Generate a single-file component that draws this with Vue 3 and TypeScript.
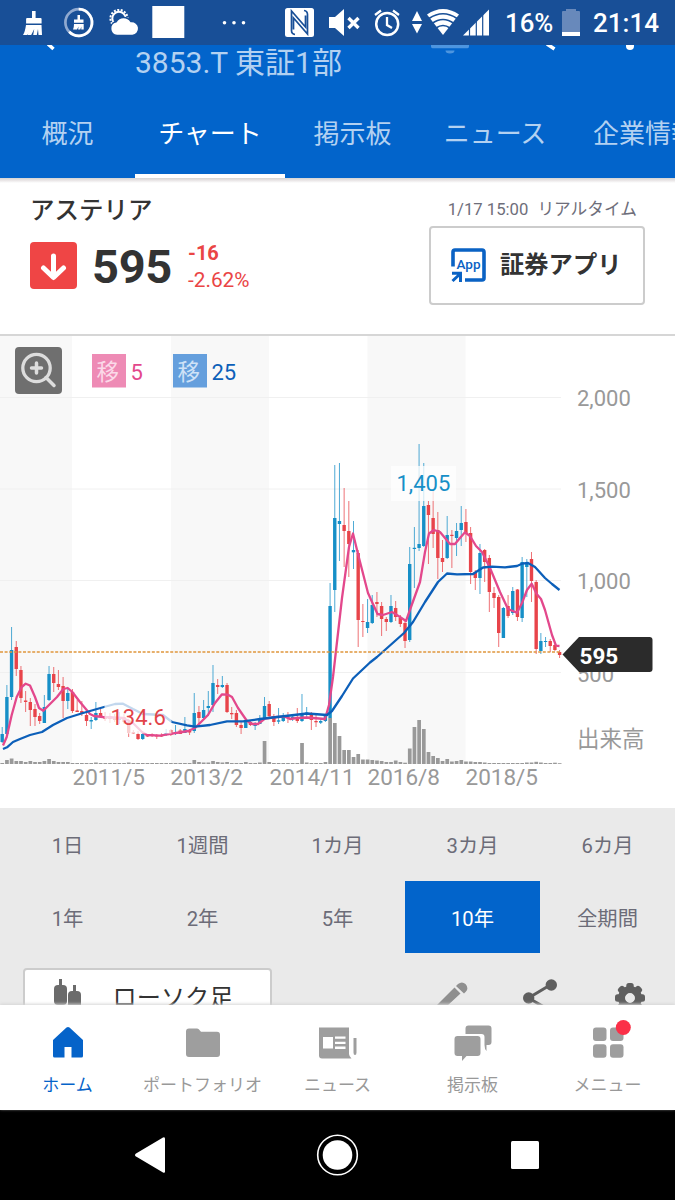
<script setup lang="ts">
type Dir = 'u' | 'd'
type Candle = [Dir, number, number, number, number]

const tabs = [
  { label: '概況', wide: false },
  { label: 'チャート', wide: true },
  { label: '掲示板', wide: false },
  { label: 'ニュース', wide: true },
  { label: '企業情報', wide: true },
]

const ranges = ['1日', '1週間', '1カ月', '3カ月', '6カ月', '1年', '2年', '5年', '10年', '全期間']

// Monthly candles: direction, high, body top, body bottom, low (chart units)
const candles: Candle[] = [
  ['u', 727, 734, 742, 743], ['u', 685, 697, 734, 735], ['u', 627, 650, 697, 700], ['d', 641, 647, 669, 676],
  ['d', 666, 670, 698, 703], ['d', 691, 700.5, 702, 712], ['d', 698, 702, 710, 726], ['d', 704, 709, 717, 726],
  ['d', 713, 716, 721, 724], ['u', 695, 707, 723, 723], ['u', 666, 674, 700, 701], ['d', 667, 674, 683, 692],
  ['d', 670, 684, 687, 690], ['d', 677, 686, 701, 718], ['u', 688, 693, 701, 709], ['d', 689, 692, 711, 713],
  ['d', 700, 710.5, 712, 712], ['d', 701, 711, 714, 716], ['d', 713, 715, 721, 726], ['u', 717, 720, 721.5, 729],
  ['u', 702, 713, 720, 721], ['d', 708, 713, 717, 718], ['d', 712, 716, 719, 721], ['d', 713, 716, 719, 723],
  ['d', 714, 717, 720, 722], ['u', 712, 718, 720, 724], ['d', 714, 717, 722, 724], ['d', 719, 722, 733, 737],
  ['d', 730, 732, 733.5, 734], ['d', 731, 734, 739, 740], ['u', 732, 734, 739, 740], ['d', 734, 735, 736.5, 737],
  ['d', 733, 734.5, 736, 737], ['d', 734, 735, 736.5, 739], ['d', 733, 735, 736.5, 737], ['u', 729, 733, 735, 736],
  ['d', 729, 730, 735, 736], ['u', 725, 732, 734, 735], ['d', 729, 730.5, 734, 734], ['u', 717, 729, 733, 733],
  ['d', 729, 730.5, 732.5, 735], ['u', 693, 713, 731, 733], ['d', 706, 712, 718, 724], ['u', 700, 710, 718, 719],
  ['u', 691, 706, 708, 716], ['u', 665, 683, 705, 712], ['d', 679, 685, 687, 694], ['u', 676, 685, 687, 688],
  ['d', 683, 685, 712, 713], ['d', 707, 713, 714.3, 719], ['d', 710, 713, 725, 727], ['d', 721, 725, 728, 734],
  ['u', 719, 721, 728, 728], ['d', 721, 722, 725, 726], ['u', 722, 724, 726, 730], ['u', 715, 718, 724, 724],
  ['u', 697, 706, 719, 720], ['d', 701, 704, 716, 718], ['d', 714, 716, 722, 726], ['u', 708, 720.3, 721.7, 724],
  ['u', 713, 717, 721, 722], ['d', 712, 716.7, 718, 723], ['u', 714, 716.7, 719, 721], ['d', 708, 718, 721, 723],
  ['u', 694, 715, 721, 722], ['u', 707, 712.5, 714, 719], ['d', 712, 713, 720, 730], ['d', 715, 721, 722.3, 727],
  ['u', 719, 721, 722.7, 724], ['u', 714, 716, 721, 722], ['u', 583, 606, 718, 718], ['u', 465, 518, 590, 612],
  ['u', 463, 521, 524, 561], ['d', 488, 525, 531, 567], ['d', 501, 531, 544, 577], ['u', 521, 550, 552.3, 569],
  ['d', 550, 553, 620, 647], ['d', 604, 621, 622, 637], ['u', 599, 622, 628, 633], ['u', 595, 605, 623, 624],
  ['d', 592, 602, 604, 617], ['d', 602, 606, 619, 636], ['d', 617, 619, 622, 631], ['u', 595, 606, 622, 623],
  ['d', 601, 608, 617, 621], ['d', 615, 618, 624, 627], ['d', 620, 623, 641, 648], ['u', 547, 564, 640, 642],
  ['u', 527, 547.8, 549, 588], ['u', 444, 544, 548, 551], ['u', 463, 506, 546, 547], ['d', 501, 505, 515, 564],
  ['d', 490, 518, 534, 548], ['d', 512, 530, 558, 579], ['d', 540, 558, 562, 572], ['u', 516, 535, 558, 559],
  ['d', 530, 534.8, 536, 568], ['u', 523, 531, 538, 556], ['u', 506, 523, 530, 546], ['d', 509, 522, 533, 542],
  ['d', 527, 533, 572, 584], ['d', 570, 572, 578, 590], ['u', 544, 553, 578, 594], ['d', 549, 550, 562, 582],
  ['d', 555, 558, 592, 612], ['d', 587, 593, 598, 608], ['d', 595, 597, 633, 647], ['u', 607, 608, 638, 638],
  ['d', 595, 606, 616, 618], ['u', 587, 591, 613, 615], ['d', 589, 589.5, 617, 621], ['u', 557, 562, 618, 622],
  ['u', 559, 563, 567, 597], ['d', 552, 559, 581, 602], ['d', 580, 582, 649, 654], ['u', 633, 641, 651, 654],
  ['u', 637, 641, 642, 647], ['d', 639, 641, 646, 652], ['d', 643, 645, 650, 651], ['d', 650, 652, 655, 658],
]

const volumes: number[] = [
  1, 4, 5.5, 3, 3, 2, 3, 2, 2, 3, 5, 3, 2, 2, 2, 1, 1, 1, 1, 1, 1.5, 1, 1, 1, 1, 1, 1, 1.5, 1, 1,
  1, 1, 1, 1, 1, 1, 1, 1, 1, 1, 1, 4, 2, 1.5, 1.5, 3, 2, 1.5, 2, 1, 1, 1, 2, 1, 1, 1.5, 23, 2, 1, 1,
  1, 1, 1, 1, 21, 1.5, 1, 1, 1, 2, 46, 41, 28, 14, 14, 7, 10, 4.5, 4.5, 4, 3.5, 3, 2, 2, 3.5, 2, 1.3,
  15.5, 37, 44, 35, 12, 8, 6, 3, 5, 2.5, 3, 4, 2.5, 2.5, 2, 2, 1.5, 1, 1, 1, 1, 1, 1, 1, 1, 1.5, 1.5,
  2.2, 1.5, 1, 1, 1.3, 0.8,
]

const shortAverage =
  '3,745.5 6.7,737 11.7,715 16.7,697 21.7,687 25.7,683.7 30,685.5 35,697 39,708 43.3,710.7 49,705 57,697 63.3,689 67.7,688 72.3,692 80,702 90,714 94,716 103,717 123,718 133,723 142,732 147,735 160,735.7 172,733.7 182,732 188,731 195,728 203,720 208,715 215,703 222,694.3 228,694.7 232,697 238,708 247,721 252,724 258,724 265,718.5 277,717 285,716.7 290,719 297,718 307,717.5 325,719 329,705 333,677 342,598 349,547 353,533.5 358,554 368,593 377.5,614 383,615 392,612 400,617 406,621 411,607 420,582 425,552 429,533.5 434,530 440,532 450,544 455,544 460,538 465,532.3 470,536 476,546 482,552 490,568 500,592 508,609 517,612.7 522,603 527,590 531.7,583.7 536.7,594 541,599 545,610 552,635 556,645.7 559.5,646'
const longAverage =
  '3,749 7,747.3 13,742 20,739 30,735 42,732 53,725 67,718 83,713 104,707 115,704 123,703.7 133,709 143,714 163,715 172,722 187,725.3 195,726.7 210,725 227,721.3 243,721.3 260,719 277,717 307,713.5 327,715 332,711 342,696 353,678.5 370,662.5 377,657 404,633 413,622 425,602 438,582 447,573.5 457,574.3 473,574 483,567.5 492,566.7 505,567.3 517,566 522,563.7 528,563 535,567 545,578 552,584 559.5,590'

const bands = [[0, 72], [171, 98], [367.5, 98]]
const gridlines = [397.5, 489, 580.5, 672.5]
const prices = [['2,000', 406], ['1,500', 498], ['1,000', 589], ['500', 682]] as const
const dates = [['2011/5', 72.5], ['2013/2', 170.5], ['2014/11', 269.5], ['2016/8', 367.5], ['2018/5', 465.5]] as const

const cx = (i: number): number => 2.2 + i * 4.684
const tone = (d: Dir): string => (d === 'u' ? '#168fc7' : '#e8444a')
const gearTeeth = [0, 45, 90, 135, 180, 225, 270, 315]
</script>

<template>
  <div class="screen">
    <header class="status">
      <svg class="status-icons" width="495" height="45" viewBox="0 0 495 45" fill="#fff">
        <path d="M32 11h3.600v7h5q1 0 1 1v4.500h-15.500v-4.500q0-1 1-1h4.900z" />
        <path d="M26 25h15.500l.5 10h-3.500l-.5-6-1.200 6h-3.600l1-6-3 6h-3.600l3-6q-2 5-3.600 6h-4q2-3 3-10z" />
        <circle cx="78.700" cy="22.500" r="13.300" fill="none" stroke="#8fa9d0" stroke-width="2.700" />
        <path d="M78.700 9.200a13.300 13.300 0 1 1-9.500 22.600" fill="none" stroke="#fff" stroke-width="2.700" />
        <path d="M77.500 15h2.500v4.500h3.500v3.200h-9.500v-3.200h3.500zM74 24h9.700v5.500h-2.400v-3l-1 3h-2.200l.5-3-1.600 3h-4q1-2 1-5.500z" />
        <circle cx="119" cy="18.500" r="8.600" fill="none" stroke="#fff" stroke-width="2" stroke-dasharray="2 1.500" />
        <circle cx="119" cy="18.500" r="6.700" fill="none" stroke="#fff" stroke-width="2" />
        <path d="M117 35.500a7 7 0 0 1-1-13.800 9 9 0 0 1 15-.2 7 7 0 0 1 1.500 14z" stroke="#184f97" stroke-width="1.600" />
        <path d="M152.300 6h32v32h-32z" />
        <circle cx="224.500" cy="22.800" r="1.800" /><circle cx="234" cy="22.800" r="1.800" /><circle cx="243.500" cy="22.800" r="1.800" />
        <rect x="285" y="8" width="29" height="29" rx="2.500" />
        <path d="M295 34.500q-3.500-.5-3.500-4V11l14 16V15.500M304 10.500q3.500.5 3.500 4V34l-14-16v11.500" fill="none" stroke="#184f97" stroke-width="1.700" />
        <path d="M329 17h6l9-8v27l-9-8h-6z" />
        <path d="m348.500 18 10 10m0-10-10 10" fill="none" stroke="#fff" stroke-width="3.400" />
        <circle cx="387.200" cy="24" r="11" fill="none" stroke="#fff" stroke-width="2.500" />
        <path d="M387 17v8l5 3M375 15l6-4.500M393 10.500l6 4.500" fill="none" stroke="#fff" stroke-width="2.300" />
        <path d="m417 11 5 10h-10zm0 22.500-5-9.500h10z" />
        <path d="M443 35 427 14.500q16-11 32 0z" />
        <path d="M429 18.500q14-9.500 28 0M432 23.500q11-8 22 0M436 28q7-5 14 0" fill="none" stroke="#184f97" stroke-width="1.700" />
        <path d="M463 35.500 489 9.500v26z" />
        <path d="M469.500 27v9M476.300 20v16M482.700 13v23" stroke="#184f97" stroke-width="1.200" />
      </svg>
      <span class="battery-text">16%</span>
      <svg class="battery" width="18" height="28" viewBox="0 0 18 28">
        <path d="M4 0h10v2h3q1 0 1 1v24H0V3q0-1 1-1h3z" fill="#6889bb" /><path d="M0 23h18v4H0z" fill="#fff" />
      </svg>
      <span class="clock">21:14</span>
    </header>

    <section class="appbar">
      <svg class="appbar-icons" width="675" height="10" viewBox="0 0 675 10">
        <path d="m48-1 5.500 5M547-1l7.500 5" stroke="#fff" stroke-width="3.500" fill="none" />
        <path d="M431 0h38v1.500q0 1.700-1.500 1.700h-35q-1.500 0-1.500-1.700zM445.500 5.500h9a4.500 3 0 0 1-9 0z" fill="#4d95df" />
        <circle cx="630" cy="1" r="4" fill="#fff" />
      </svg>
      <div class="code">3853.T 東証1部</div>
      <nav class="tabs">
        <span v-for="(t, i) in tabs" :key="t.label" class="tab" :class="{ wide: t.wide, active: i === 1 }">{{ t.label }}</span>
      </nav>
    </section>

    <section class="quote">
      <div class="quote-left">
        <h1>アステリア</h1>
        <div class="price-row">
          <svg width="47" height="47" viewBox="0 0 47 47">
            <rect width="47" height="47" rx="4" fill="#ef4545" />
            <path d="M23.500 14v21M13.500 26l10 9.500 10-9.500" fill="none" stroke="#fff" stroke-width="5" stroke-linecap="round" stroke-linejoin="round" />
          </svg>
          <strong class="price">595</strong>
          <div class="change"><b>-16</b><span>-2.62%</span></div>
        </div>
      </div>
      <div class="quote-right">
        <div class="time"><span>1/17 15:00</span><span>リアルタイム</span></div>
        <div class="app-button">
          <svg width="35" height="35" viewBox="0 0 35 35">
            <path d="M2 18.500V4q0-2 2-2h27q2 0 2 2v26q0 2-2 2H14" fill="none" stroke="#0a62c4" stroke-width="3.600" />
            <path d="M1 25.300h8.500V34M9 26l-7.500 7" fill="none" stroke="#0a62c4" stroke-width="3" />
            <text x="17.500" y="21" text-anchor="middle" class="app-glyph">App</text>
          </svg>
          <span>証券アプリ</span>
        </div>
      </div>
    </section>

    <svg class="chart" width="675" height="472" viewBox="0 336 675 472">
      <rect v-for="b in bands" :key="b[0]" :x="b[0]" y="336" :width="b[1]" height="428" fill="#f8f8f8" />
      <path v-for="g in gridlines" :key="g" :d="`M0 ${g}H561`" stroke="#f0f0f0" />
      <rect v-for="(v, i) in volumes" :key="'v' + i" :x="cx(i) - 1.8" :y="764 - v" width="3.700" :height="v" fill="#999" />
      <g v-for="(c, i) in candles" :key="'c' + i" :fill="tone(c[0])">
        <rect :x="cx(i) - 0.5" :y="c[1]" width="1" :height="c[4] - c[1]" opacity=".75" />
        <rect :x="cx(i) - 1.7" :y="c[2]" width="3.400" :height="c[3] - c[2]" />
      </g>
      <polyline :points="shortAverage" class="average" stroke="#e3488c" />
      <polyline :points="longAverage" class="average" stroke="#0c5fb9" />
      <path d="M0 652H561" stroke="#df963d" stroke-width="1.400" stroke-dasharray="3 1.600" />
      <rect x="391" y="466" width="65" height="35" fill="#fff" opacity=".75" />
      <rect x="104.500" y="699" width="67" height="34.500" fill="#fff" opacity=".75" />
      <text x="396.500" y="491" class="label" fill="#168fc7">1,405</text>
      <text x="110.500" y="725" class="label" fill="#e2444a">134.6</text>
      <text v-for="p in prices" :key="p[0]" x="577" :y="p[1]" class="label" fill="#999">{{ p[0] }}</text>
      <text x="577" y="746.500" class="label cjk" fill="#999">出来高</text>
      <text v-for="d in dates" :key="d[0]" :x="d[1]" y="785" class="label date" fill="#999">{{ d[0] }}</text>
      <path d="M562.500 654.500 579 637h70.500q3 0 3 3v29q0 3-3 3H579z" fill="#2b2b2b" />
      <text x="579.500" y="664" class="tag">595</text>

      <rect x="15" y="347" width="47" height="47" rx="4" fill="#6f6f6f" />
      <circle cx="36.500" cy="368" r="13.700" fill="none" stroke="#ddd" stroke-width="3.300" />
      <path d="m46 377.500 8 8M31.500 368h10M36.500 363v10" fill="none" stroke="#ddd" stroke-width="3.500" stroke-linecap="round" />
      <rect x="92" y="354" width="34" height="33.500" fill="#ee8bb5" />
      <text x="96.500" y="380" class="label cjk" fill="#fbd9e8">移</text>
      <text x="130.500" y="380" class="label" fill="#e3488c">5</text>
      <rect x="173" y="354" width="34" height="33.500" fill="#659fdd" />
      <text x="177.500" y="380" class="label cjk" fill="#cfe2f7">移</text>
      <text x="211.500" y="380" class="label" fill="#0c5fb9">25</text>
    </svg>

    <section class="controls">
      <div class="ranges">
        <span v-for="r in ranges" :key="r" :class="{ selected: r === '10年' }">{{ r }}</span>
      </div>
      <div class="tools">
        <div class="chart-type">
          <svg width="28" height="40" viewBox="0 0 28 40" fill="#6b6b6b">
            <rect x="5" y="0" width="3" height="9" /><rect y="6" width="13" height="20" rx="4" />
            <rect x="19" y="6" width="3" height="9" /><rect x="14" y="12" width="13" height="20" rx="4" />
          </svg>
          <span>ローソク足</span>
        </div>
        <svg class="tool-icons" width="240" height="52" viewBox="435 953 240 52">
          <path d="m436 1006 18.500-18.500 6 6L447 1006zM456 986l2-2q4-3 7.500 0 3.500 4 .5 7.500l-2 2z" fill="#8f8f8f" />
          <path d="m551 984.500-22.500 13.500 22.500 13" fill="none" stroke="#5f5f5f" stroke-width="3" />
          <circle cx="551.300" cy="985" r="5.700" fill="#5f5f5f" /><circle cx="528.700" cy="998" r="5.700" fill="#5f5f5f" />
          <g fill="#5f5f5f">
            <rect v-for="a in gearTeeth" :key="a" x="626.300" y="983" width="7.400" height="10" rx="2.500" :transform="`rotate(${a} 630 998)`" />
          </g>
          <circle cx="630" cy="998" r="8.500" fill="none" stroke="#5f5f5f" stroke-width="7" />
        </svg>
      </div>
    </section>

    <nav class="bottom-nav">
      <div class="nav-item current">
        <svg width="40" height="40" viewBox="0 0 40 40"><path d="M18.500 3.500q1.500-1.200 3 0L35 16v16q0 1.500-1.500 1.500H23.500V23h-7v10.500H6.500Q5 33.500 5 32V16z" fill="#0563c9" /></svg>
        <span>ホーム</span>
      </div>
      <div class="nav-item">
        <svg width="40" height="40" viewBox="0 0 40 40"><path d="M6 4.500h8q1 0 1.800.8l2.200 2.400h16q3 0 3 3V30q0 3-3 3H6q-3 0-3-3V7.500q0-3 3-3z" fill="#9e9e9e" /></svg>
        <span>ポートフォリオ</span>
      </div>
      <div class="nav-item">
        <svg width="40" height="40" viewBox="0 0 40 40">
          <path d="M1 3.500h30V30q0 2 2.500 4.500H4q-3 0-3-3zM35.500 14h3v14.500q0 2.500-1.500 2.500t-1.500-2.500z" fill="#9e9e9e" />
          <path d="M5 13h10v11.500H5zM17 12.500h10.500v2.300H17zM17 17.700h10.500V20H17zM17 22.500h10.500V25H17z" fill="#fff" />
        </svg>
        <span>ニュース</span>
      </div>
      <div class="nav-item">
        <svg width="40" height="40" viewBox="0 0 40 40" fill="#9e9e9e">
          <path d="M12.500 10V4.500q0-3 3-3h20q3 0 3 3V18q0 3-3 3h-2v6q-2-2-2-6V13q0-3-3-3z" />
          <path d="M4.500 12h20q3 0 3 3v14q0 3-3 3h-11L9 37v-5H4.500q-3 0-3-3V15q0-3 3-3z" />
        </svg>
        <span>掲示板</span>
      </div>
      <div class="nav-item">
        <svg width="40" height="40" viewBox="0 0 40 40" fill="#9e9e9e" overflow="visible">
          <rect x="5" y="3.500" width="13.500" height="13.500" rx="3" /><rect x="22" y="3.500" width="13.500" height="13.500" rx="3" />
          <rect x="5" y="20.200" width="13.500" height="13.500" rx="3" /><rect x="22" y="20.200" width="13.500" height="13.500" rx="3" />
          <circle cx="35.300" cy="3.500" r="7.500" fill="#fb3048" />
        </svg>
        <span>メニュー</span>
      </div>
    </nav>

    <footer class="system-nav">
      <svg width="675" height="90" viewBox="0 1110 675 90" fill="#fff">
        <path d="M163 1137.500q2-1 2 1.200v32.500q0 2.200-2 1.200l-27-15.800q-2-1.600 0-3.200z" />
        <circle cx="337.500" cy="1155" r="14.800" /><circle cx="337.500" cy="1155" r="19.800" fill="none" stroke="#fff" stroke-width="1.600" />
        <rect x="511" y="1141" width="28" height="28" rx="1.500" />
      </svg>
    </footer>
  </div>
</template>

<style>
body { margin: 0; overflow: hidden; }
</style>

<style scoped>
.screen { width: 675px; height: 1200px; overflow: hidden; display: flex; flex-direction: column; background: #fff; font-family: Roboto, "Noto Sans CJK JP", sans-serif; color: #333; }
.screen svg { display: block; flex: none; }
.status { height: 45px; flex: none; display: flex; align-items: center; background: #184f97; color: #fff; font-weight: 500; }
.battery-text { width: 67px; margin-left: 10px; font-size: 25.8px; padding-top: 1px; }
.battery { margin-left: -10px; }
.clock { margin-left: 13px; font-size: 26px; padding-top: 1px; }
.appbar { position: relative; height: 133px; flex: none; background: #0264cb; color: #b3d1f1; overflow: hidden; }
.appbar-icons { position: absolute; left: 0; top: 0; }
.code { margin-left: 135px; height: 43px; line-height: 35px; font-size: 30px; white-space: nowrap; }
.tabs { display: flex; height: 90px; }
.tab { width: 135px; flex: none; box-sizing: border-box; text-align: center; font-size: 26px; line-height: 92px; white-space: nowrap; border-bottom: 4px solid transparent; }
.tab.wide { width: 150px; }
.tab.active { color: #fff; border-bottom-color: #fff; }
.quote { height: 158px; flex: none; box-sizing: border-box; display: flex; justify-content: space-between; padding: 14px 30px 0; border-bottom: 2px solid #d6d6d6; background: linear-gradient(#d4d4d4, #e6e2e3 2px, #fff 5px); }
h1 { margin: 0; font-size: 24.5px; line-height: 38px; font-weight: 500; }
.price-row { display: flex; align-items: center; margin-top: 12px; height: 47px; }
.price { margin-left: 15px; font-size: 47px; line-height: 54px; letter-spacing: -.3px; padding-top: 3px; }
.change { display: flex; flex-direction: column; margin-left: 16px; padding-top: 2px; color: #ea4545; font-size: 20.8px; line-height: 27px; }
.change b { font-size: 20px; }
.quote-right { width: 216px; }
.time { display: flex; justify-content: flex-end; gap: 9px; padding-right: 8px; font-size: 16.7px; height: 34px; line-height: 36px; color: #6e6e7a; white-space: nowrap; }
.app-button { box-sizing: border-box; height: 79px; display: flex; align-items: center; gap: 14px; padding: 0 0 1px 20px; border: 2px solid #ccc; border-radius: 4px; font-size: 24.3px; line-height: 30px; font-weight: 700; white-space: nowrap; }
.app-glyph { font-size: 13.5px; font-weight: 500; fill: #0a62c4; }
.chart { font-family: Roboto, "Noto Sans CJK JP", sans-serif; }
.average { fill: none; stroke-width: 2.300; stroke-linejoin: round; }
.label { font-size: 22px; }
.label.cjk { font-size: 22.5px; }
.label.date { font-size: 22.5px; }
.tag { font-size: 22.5px; font-weight: 700; fill: #fff; }
.controls { height: 197px; flex: none; background: #eaeaea; overflow: hidden; }
.ranges { display: grid; grid-template-columns: repeat(5, 135px); grid-auto-rows: 72.500px; }
.ranges span { display: flex; align-items: center; justify-content: center; font-size: 20.3px; color: #6c6c78; }
.ranges .selected { background: #0264cb; color: #fff; }
.tools { display: flex; justify-content: space-between; }
.chart-type { box-sizing: border-box; margin: 15px 0 0 22.500px; width: 249px; height: 78px; padding: 9px 0 0 29px; display: flex; gap: 31px; border: 2px solid #ccc; border-radius: 4px; background: #fff; font-size: 24.2px; line-height: 38px; }
.bottom-nav { position: relative; height: 105px; flex: none; display: flex; background: #fff; box-shadow: 0 -1px 3px #d5d5d5; }
.nav-item { width: 135px; padding-top: 19px; display: flex; flex-direction: column; align-items: center; font-size: 17px; line-height: 24px; color: #999; gap: 9px; box-sizing: border-box; white-space: nowrap; }
.current { color: #0563c9; }
.system-nav { height: 90px; flex: none; background: #000; }
</style>
